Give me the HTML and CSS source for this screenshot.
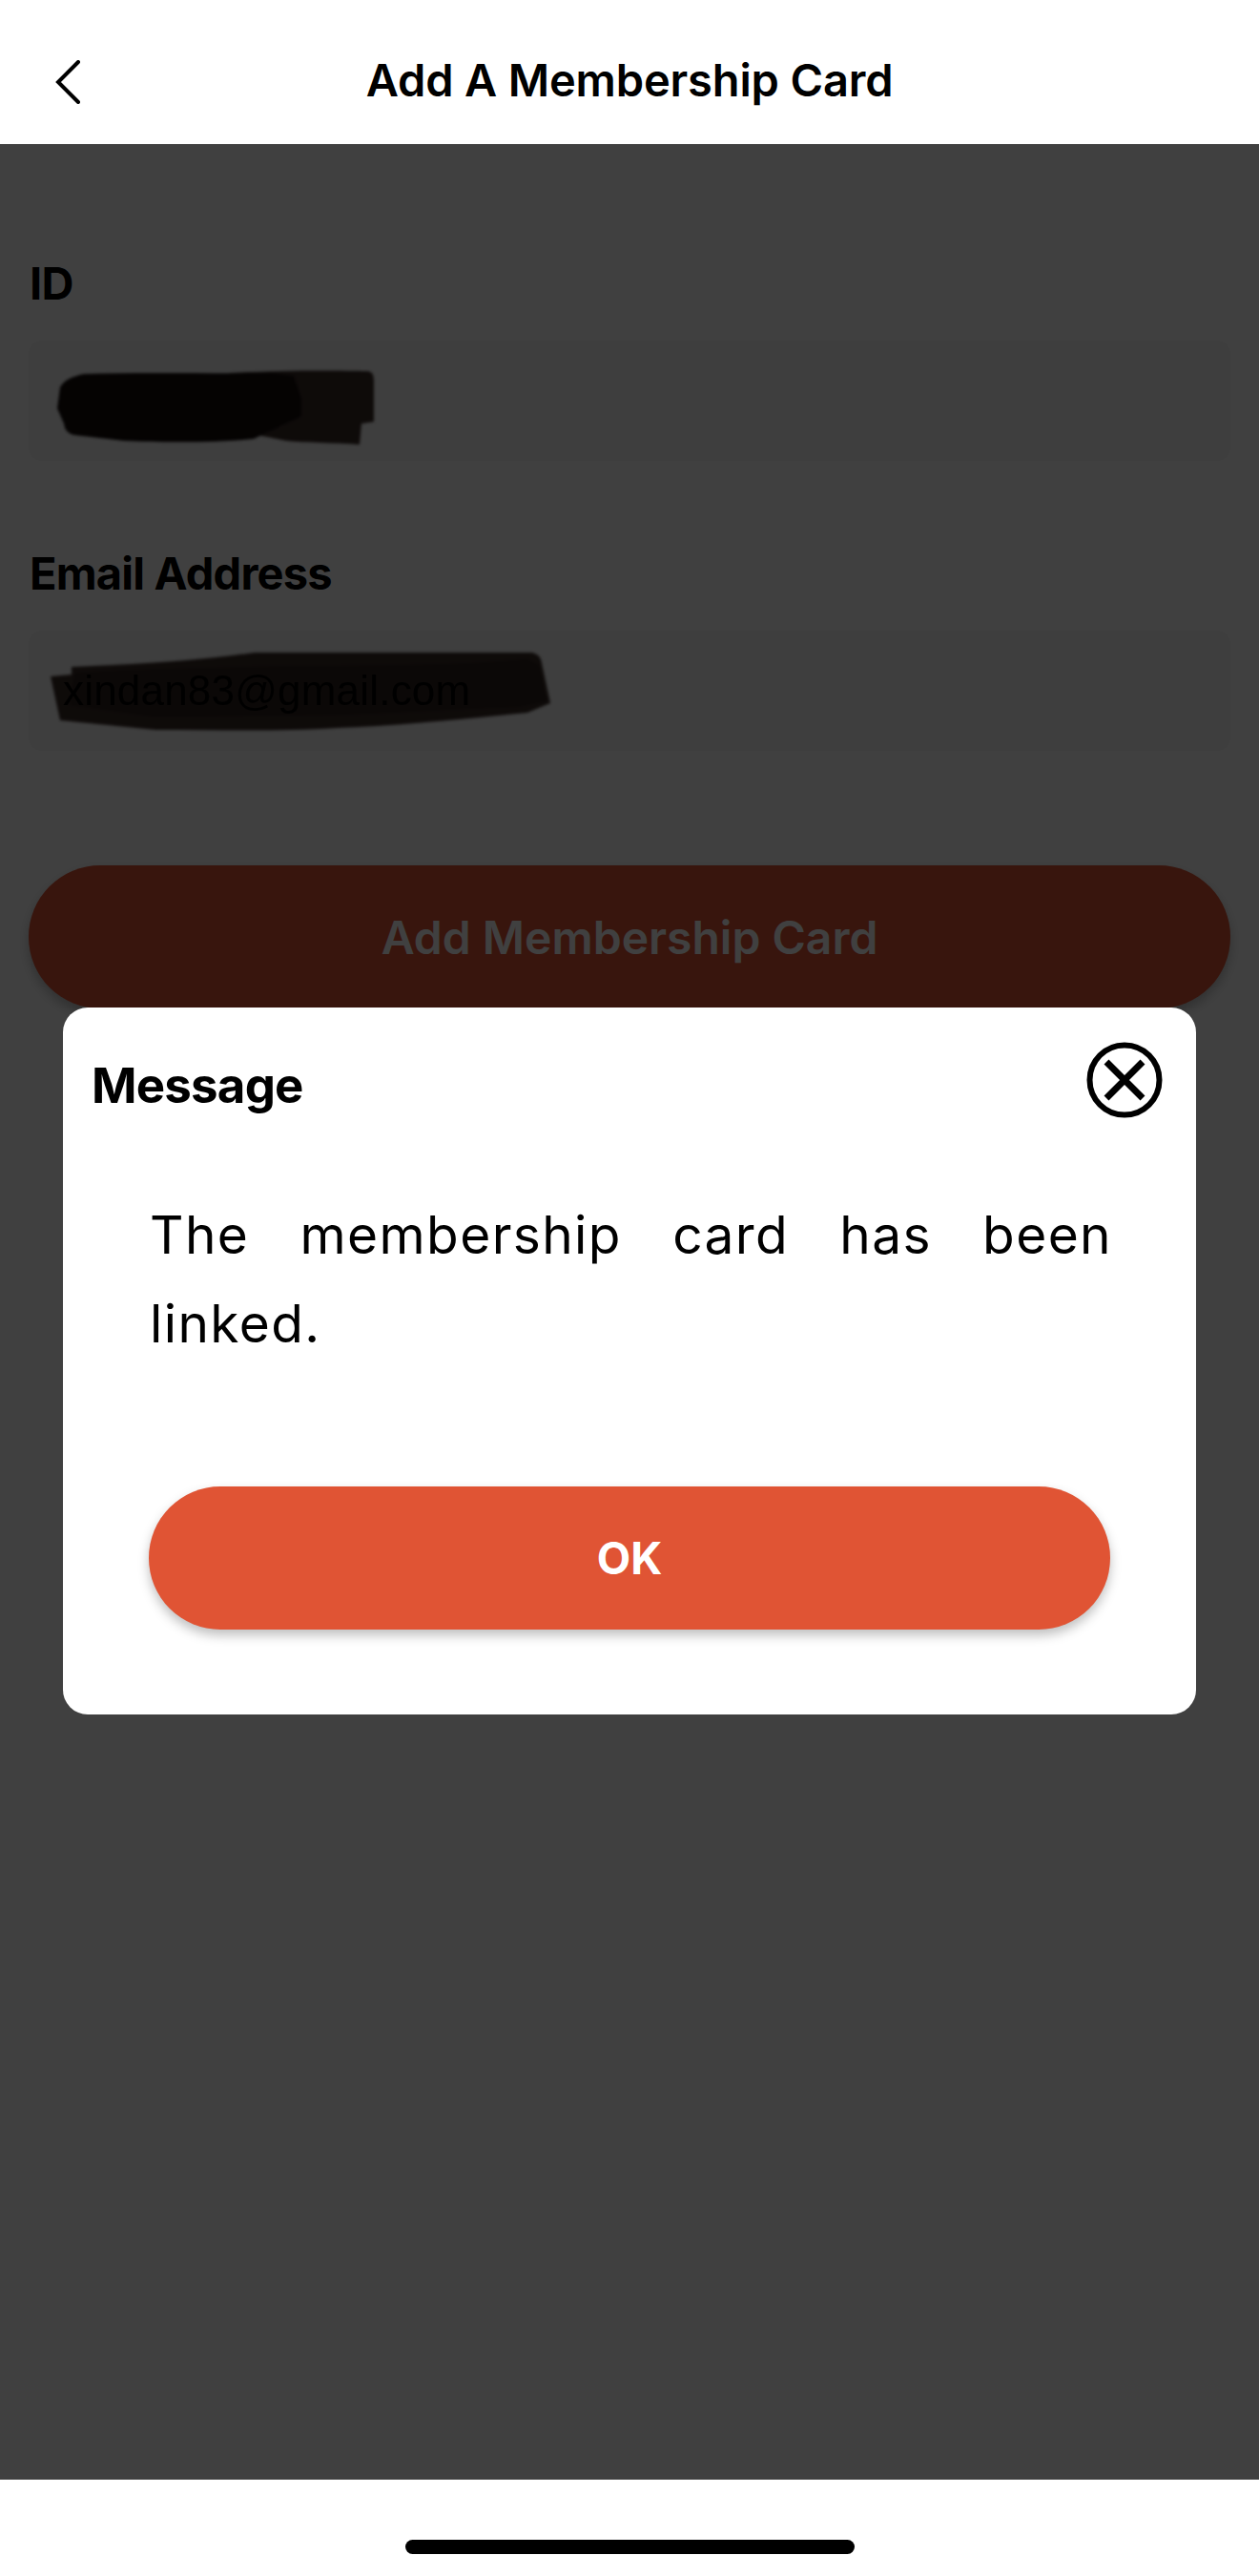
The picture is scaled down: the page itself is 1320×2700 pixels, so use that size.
FILE: index.html
```html
<!DOCTYPE html>
<html lang="en">
<head>
<meta charset="utf-8">
<title>Add A Membership Card</title>
<link rel="stylesheet" href="styles.css">
</head>
<body>
<div class="page">
  <header class="nav">
    <svg class="back" viewBox="0 0 26 46" width="26" height="46" aria-hidden="true"><path d="M24 2 L3 23 L24 44"/></svg>
    <h1 class="nav-title">Add A Membership Card</h1>
  </header>
  <main class="main">
    <form class="form">
      <div class="field">
        <div class="label">ID</div>
        <div class="input">
          <svg class="scribble scribble-id" viewBox="0 0 332 80" width="332" height="80" aria-hidden="true">
            <path class="ink-light" d="M180 3 C230 0 290 0 326 1 Q332 2 332 10 L332 54 L319 56 L317 78 C290 76 260 76 240 74 L170 60 Z"/>
            <path class="ink-dark" d="M28 4 C90 2 170 4 225 3 L248 6 L256 30 L256 48 L206 72 C170 76 110 76 70 74 L18 68 Q8 66 7 56 L0 40 L3 18 Q8 8 28 4 Z"/>
          </svg>
        </div>
      </div>
      <div class="field field-email">
        <div class="label">Email Address</div>
        <div class="input">
          <svg class="scribble scribble-email" viewBox="0 0 524 84" width="524" height="84" aria-hidden="true">
            <path class="ink-light" d="M22 16 C80 14 150 10 214 1 L505 1 Q514 3 515 12 L524 54 L500 64 C420 72 360 78 300 80 C240 84 170 82 110 82 L10 72 L0 26 L22 24 Z"/>
            <path class="ink-mid" d="M26 22 C90 18 150 18 210 16 C300 14 420 16 500 8 L512 14 L520 52 L490 58 C420 60 360 64 300 66 L110 68 L20 56 Z"/>
          </svg>
          <span class="input-text">xindan83@gmail.com</span>
        </div>
      </div>
      <button class="submit" type="button">Add Membership Card</button>
    </form>
    <div class="scrim">
      <section class="dialog">
        <div class="dialog-head">
          <h2 class="dialog-title">Message</h2>
          <svg class="close" viewBox="0 0 80 80" width="80" height="80" aria-hidden="true">
            <circle class="close-ring" cx="40" cy="40" r="36.5"/>
            <path class="close-x" d="M21 21 L59 59 M59 21 L21 59"/>
          </svg>
        </div>
        <p class="dialog-body">The membership card has been linked.</p>
        <button class="ok" type="button">OK</button>
      </section>
    </div>
  </main>
  <footer class="home-bar"><span class="home-indicator"></span></footer>
</div>
</body>
</html>
```
FILE: styles.css
```css
* { box-sizing: border-box; }
html, body { margin: 0; padding: 0; background: #fff; }
.page {
  width: 1320px;
  height: 2700px;
  display: flex;
  flex-direction: column;
  font-family: Inter, "Liberation Sans", sans-serif;
  color: #000;
  overflow: hidden;
}
.nav {
  height: 151px;
  flex: none;
  position: relative;
  display: flex;
  align-items: center;
  justify-content: center;
  padding-top: 17px;
  background: #fff;
}
.back {
  position: absolute;
  left: 58px;
  top: 63px;
  fill: none;
  stroke: #000;
  stroke-width: 4;
  stroke-linecap: round;
  stroke-linejoin: miter;
}
.nav-title {
  margin: 0;
  font-size: 47px;
  font-weight: 600;
  line-height: 56px;
  letter-spacing: -0.15px;
}
.main {
  flex: 1;
  position: relative;
  background: #fff;
}
.form {
  padding: 116px 30px 0;
}
.label {
  font-size: 47px;
  font-weight: 700;
  line-height: 60px;
  letter-spacing: -0.8px;
  color: #000;
  margin-left: 1px;
}
.input {
  margin-top: 30px;
  height: 126px;
  border-radius: 14px;
  background: #f6f6f6;
  position: relative;
  display: flex;
  align-items: center;
  padding-left: 36px;
}
.field-email { margin-top: 88px; }
.input-text {
  position: relative;
  font-family: "Liberation Sans", sans-serif;
  font-size: 44px;
  letter-spacing: 0.2px;
  color: #000;
  filter: blur(0.6px);
  z-index: 2;
}
.scribble {
  position: absolute;
  filter: blur(1.5px);
}
.scribble-id { left: 30px; top: 31px; }
.scribble-email { left: 23px; top: 22px; }
.ink-light { fill: #3a2c27; }
.ink-mid { fill: #2c201c; }
.ink-dark { fill: #140c0a; }
.submit {
  display: block;
  width: 100%;
  height: 150px;
  margin-top: 120px;
  padding: 0;
  border: 0;
  border-radius: 75px;
  background: #e05434;
  box-shadow: 0 6px 12px rgba(0, 0, 0, 0.25);
  color: #fff;
  font-family: Inter, "Liberation Sans", sans-serif;
  font-size: 48px;
  font-weight: 600;
}
.scrim {
  position: absolute;
  inset: 0;
  background: rgba(0, 0, 0, 0.75);
  padding-top: 905px;
}
.dialog {
  width: 1188px;
  height: 741px;
  margin: 0 auto;
  background: #fff;
  border-radius: 26px;
  padding: 36px 35px 0 30px;
}
.dialog-head {
  display: flex;
  justify-content: space-between;
  align-items: flex-start;
}
.dialog-title {
  margin: 16px 0 0;
  font-size: 51px;
  font-weight: 700;
  line-height: 60px;
  letter-spacing: -0.8px;
}
.close {
  fill: none;
  stroke: #000;
}
.close-ring { stroke-width: 6; }
.close-x { stroke-width: 7; }
.dialog-body {
  margin: 76px 53px 0 61px;
  font-size: 55px;
  line-height: 93px;
  text-align: justify;
  letter-spacing: 1.4px;
}
.ok {
  display: block;
  width: 1008px;
  height: 150px;
  margin: 124px 0 0 60px;
  padding: 0;
  border: 0;
  border-radius: 75px;
  background: #e05434;
  box-shadow: 0 6px 12px rgba(0, 0, 0, 0.25);
  color: #fff;
  font-family: Inter, "Liberation Sans", sans-serif;
  font-size: 46px;
  font-weight: 700;
}
.home-bar {
  height: 101px;
  flex: none;
  background: #fff;
  display: flex;
  justify-content: center;
  padding-top: 63px;
}
.home-indicator {
  width: 471px;
  height: 15px;
  border-radius: 8px;
  background: #000;
}
```
